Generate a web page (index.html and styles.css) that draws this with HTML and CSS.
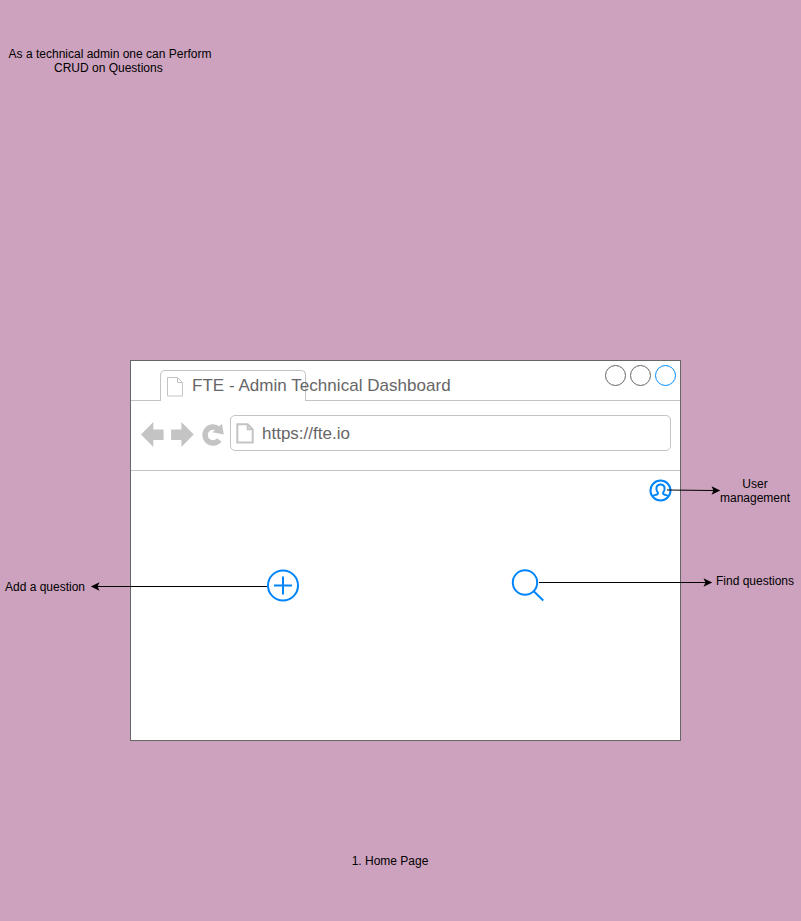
FILE: index.html
```html
<!DOCTYPE html>
<html lang="en">
<head>
<meta charset="utf-8">
<title>Home Page wireframe</title>
<link rel="stylesheet" href="styles.css">
</head>
<body>
<main class="canvas">
  <p class="note note-story">As a technical admin one can Perform <br><span class="story-end">CRUD on Questions&nbsp;</span></p>

  <section class="window">
    <header class="tabbar">
      <div class="tab">
        <svg class="tab-icon" width="17" height="20" viewBox="0 0 17 20"><path d="M.5.5h10l5 5v13.500h-15zM10.500.5v5h5"/></svg>
        <span class="tab-title">FTE - Admin Technical Dashboard</span>
      </div>
      <div class="controls"><i class="dot"></i><i class="dot"></i><i class="dot dot-active"></i></div>
    </header>
    <div class="toolbar">
      <svg class="nav" width="84" height="26" viewBox="0 0 84 26">
        <path d="M0 12.500 12.300 0v7.500h10.300v10.500h-10.300v7z"/>
        <path d="M52.700 12.500 40.400 0v7.500h-10.300v10.500h10.300v7z"/>
        <path class="reload" d="M78.300 18.100A8 8 0 1 1 77.500 7.200"/>
        <path d="M81 1.800 82.800 12.500 71.500 10.200z"/>
      </svg>
      <div class="address">
        <svg class="page-icon" width="18" height="21" viewBox="0 0 18 21"><path d="M1.300 1.300h10.400l5 5v13.200h-15.400zM11.700 1.300v5h5"/></svg>
        <span class="url">https://fte.io</span>
      </div>
    </div>
  </section>

  <svg class="overlay" width="801" height="921" viewBox="0 0 801 921">
    <g class="icon">
      <circle cx="660.500" cy="490.500" r="10"/>
      <path d="M652.800 496.200c.8-1.200 2.600-1.200 4-1.700 1.300-.5 1.400-1.200.9-2.100-2.200-3.300-1.900-8 2.800-8s5 4.700 2.800 8c-.5.900-.4 1.600.9 2.100 1.400.5 3.200.5 4 1.700"/>
      <circle cx="283" cy="585.500" r="15"/>
      <path d="M274 585.500h18M283 576.500v18"/>
      <circle cx="525" cy="582.500" r="12.200"/>
      <path d="M533.500 591l9.700 9.500"/>
    </g>
    <g class="link">
      <path d="M667 490 714 490.500M267 586.500H97M539 582.500H706"/>
      <path class="head" d="M720.200 490.500l-8.700 4.300 2-4.300-2-4.300zM90.800 586.500l8.700-4.300-2 4.300 2 4.300zM712.200 582.500l-8.700 4.300 2-4.300-2-4.300z"/>
    </g>
  </svg>

  <p class="note note-user">User<br>management</p>
  <p class="note note-add">Add a question</p>
  <p class="note note-find">Find questions</p>
  <p class="note note-page">1. Home Page</p>
</main>
</body>
</html>
```
FILE: styles.css
```css
body {
  margin: 0;
  font-family: "Liberation Sans", Arial, sans-serif;
}

.canvas {
  position: relative;
  width: 801px;
  height: 921px;
  overflow: hidden;
  background: #cda2be;
}

/* Free-placed diagram nodes */
.note {
  position: absolute;
  margin: 0;
  font-size: 12px;
  line-height: 14px;
  text-align: center;
  white-space: nowrap;
  color: #000;
}
.note-story { left: 0; top: 47px; width: 220px; }
.note-user { left: 715px; top: 477px; width: 80px; }
.note-add { left: 0; top: 580px; width: 90px; }
.note-find { left: 710px; top: 574px; width: 90px; }
.note-page { left: 340px; top: 854px; width: 100px; }

.window {
  position: absolute;
  left: 130px;
  top: 360px;
  box-sizing: border-box;
  width: 551px;
  height: 381px;
  border: 1px solid #666;
  background: #fff;
}

.tabbar {
  display: flex;
  justify-content: space-between;
  box-sizing: border-box;
  height: 40px;
  padding: 4px 4px 0 29px;
  border-bottom: 1px solid #c4c4c4;
}
.tab {
  display: flex;
  box-sizing: border-box;
  width: 146px;
  height: 31px;
  margin-top: 5px;
  padding: 6px 0 0 6px;
  border: 1px solid #c4c4c4;
  border-bottom: 0;
  border-radius: 5px 5px 0 0;
  background: #fff;
}
.tab-icon {
  flex: none;
  fill: none;
  stroke: #c4c4c4;
}
.tab-title {
  margin: -1px 0 0 8px;
  font-size: 17px;
  line-height: 20px;
  letter-spacing: 0.035px;
  white-space: nowrap;
  color: #666;
}

.controls {
  display: flex;
  gap: 4px;
}
.dot {
  box-sizing: border-box;
  width: 21px;
  height: 21px;
  border: 1px solid #666;
  border-radius: 50%;
}
.dot-active { border-color: #008cff; }

.toolbar {
  display: flex;
  align-items: flex-start;
  box-sizing: border-box;
  height: 70px;
  padding: 14px 9px 0 10px;
  border-bottom: 1px solid #c4c4c4;
}
.nav {
  flex: none;
  margin-top: 7px;
  fill: #c4c4c4;
}
.reload {
  fill: none;
  stroke: #c4c4c4;
  stroke-width: 5.5;
}
.address {
  display: flex;
  align-items: center;
  flex: 1;
  box-sizing: border-box;
  height: 36px;
  margin-left: 5px;
  padding-left: 5px;
  border: 1px solid #c4c4c4;
  border-radius: 5px;
  font-size: 17px;
  color: #666;
}
.url { padding-top: 2px; }
.page-icon {
  margin-right: 8px;
  fill: none;
  stroke: #c4c4c4;
  stroke-width: 2;
}

.overlay {
  position: absolute;
  left: 0;
  top: 0;
}
.icon {
  fill: none;
  stroke: #0085fa;
  stroke-width: 2;
}
.link {
  fill: none;
  stroke: #000;
}
.head {
  fill: #000;
  stroke: none;
}
```
